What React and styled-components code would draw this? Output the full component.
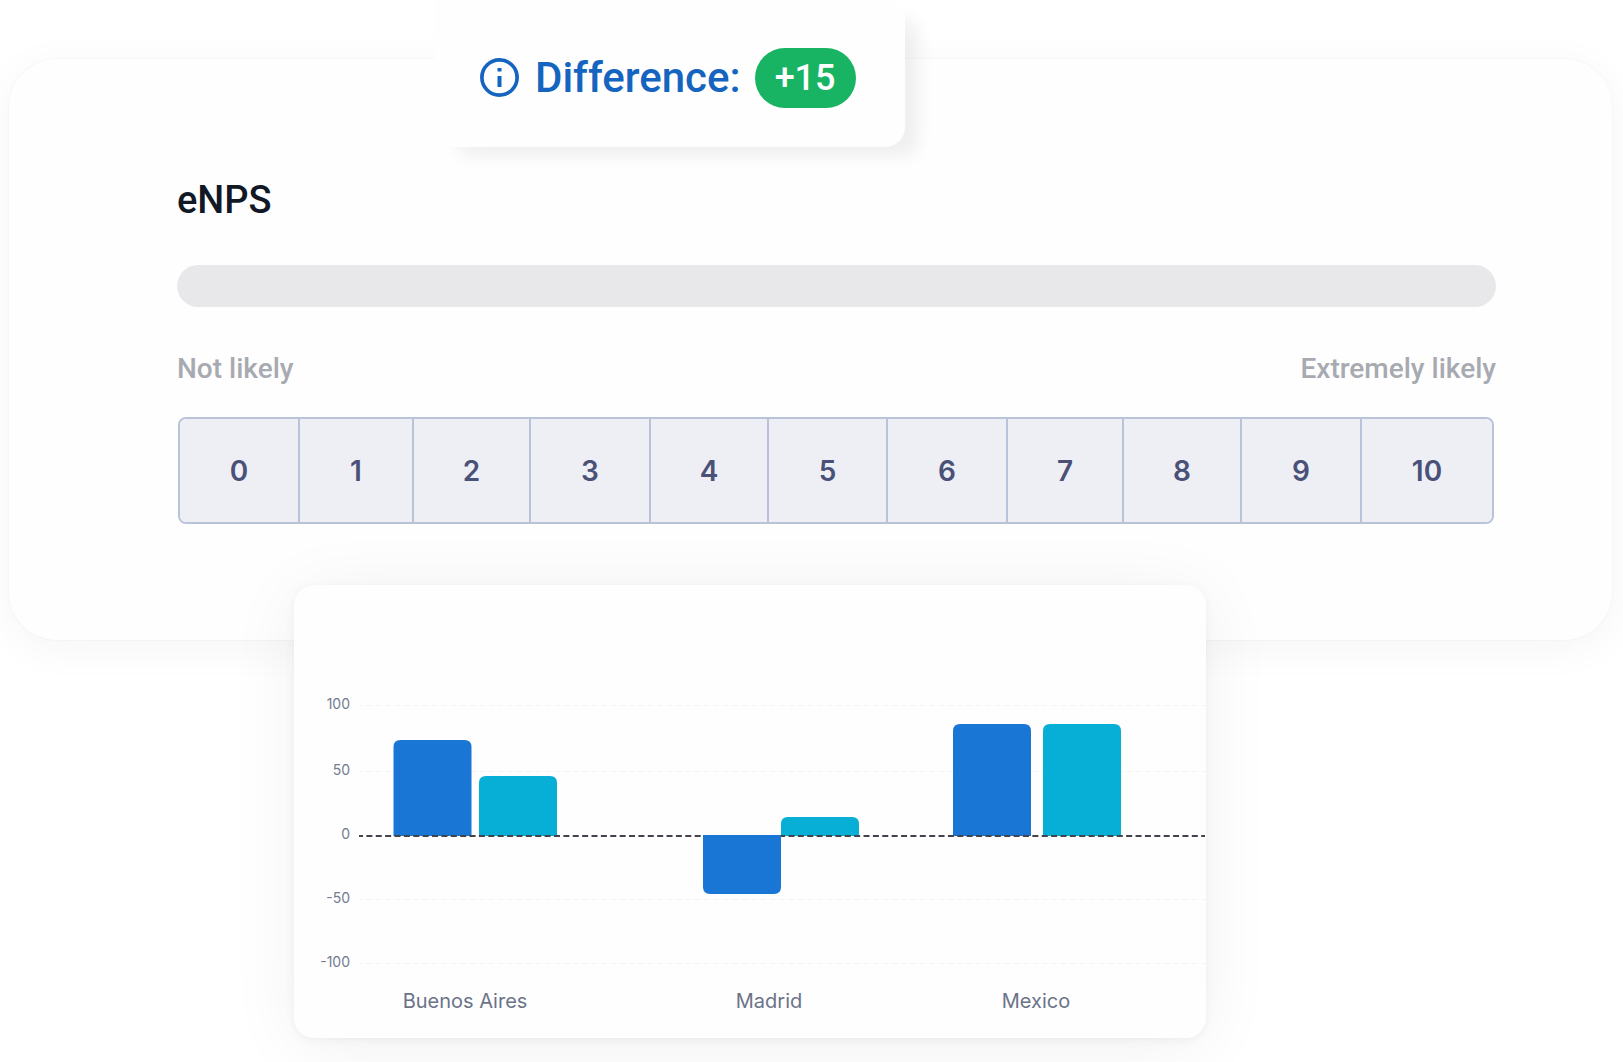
import React, { useState } from 'react';
import styled, { createGlobalStyle } from 'styled-components';

const GlobalStyle = createGlobalStyle`
    * {
        box-sizing: border-box;
    }
    body {
        margin: 0;
        background: #fff;
        font-family: Roboto, sans-serif;
        overflow-x: hidden;
    }
`;
const Page = styled.main`
    padding: 59px 11px 24px 9px;
`;
const SurveyCard = styled.section`
    position: relative;
    background: #fefefe;
    border-radius: 48px;
    box-shadow: 0 0 1px 1px rgba(0,0,0,.02), 0 8px 44px rgba(0,0,0,.045);
    padding: 119px 116px 116px 168px;
`;
// floats over the top edge of the survey card
const DifferenceCard = styled.div`
    position: absolute;
    top: -59px;
    left: 425px;
    height: 147px;
    padding: 8px 49px 0 45px;
    display: flex;
    align-items: center;
    background: #fefefe;
    border-radius: 0 20px 20px 20px;
    box-shadow: 18px 14px 16px -4px rgba(0,0,0,.06);
`;
const InfoIcon = styled.svg`
    width: 40px;
    height: 40px;
    margin-right: 16px;
`;
const DifferenceLabel = styled.span`
    color: #1565c0;
    font-size: 42px;
    font-weight: 500;
    line-height: 48px;
`;
const Pill = styled.span`
    background: #19b463;
    color: #fff;
    border-radius: 30px;
    font-size: 36px;
    font-weight: 500;
    line-height: 60px;
    padding: 0 20px;
    margin-left: 14px;
`;
const Title = styled.h1`
    margin: 0 0 43px;
    color: #111927;
    font-size: 38px;
    font-weight: 500;
    line-height: 44px;
`;
const Placeholder = styled.div`
    height: 42px;
    border-radius: 21px;
    background: #e8e8ea;
`;
const Hints = styled.div`
    display: flex;
    justify-content: space-between;
    margin: 46px 0 32px;
    color: #a7aab0;
    font-size: 28px;
    font-weight: 500;
    line-height: 32px;
`;
const Scale = styled.div`
    display: grid;
    grid-template-columns: 120fr 114fr 117fr 120fr 118fr 119fr 120fr 116fr 118fr 120fr 130fr;
    height: 107px;
    margin: 0 2px 0 1px;
    border: 2px solid #b8c2d9;
    border-radius: 8px;
    overflow: hidden;
`;
const ScaleButton = styled.button`
    border: 0;
    border-right: 2px solid #b8c2d9;
    padding: 0;
    background: ${({ $selected }) => ($selected ? '#dcdfed' : '#eeeff5')};
    color: #4a5178;
    font-family: Inter, sans-serif;
    font-size: 28px;
    font-weight: 600;
    cursor: pointer;
    &:last-child {
        border-right: 0;
    }
`;
const ChartCard = styled.section`
    position: relative;
    width: 912px;
    max-width: 100%;
    margin: -55px 0 0 285px;
    background: #fefefe;
    border-radius: 20px;
    box-shadow: 0 2px 10px rgba(0,0,0,.05), 0 8px 72px rgba(0,0,0,.06);
`;
const Chart = styled.svg`
    display: block;
    width: 100%;
    height: auto;
    font-family: Inter, sans-serif;
`;
const GridLine = styled.line`
    stroke: ${({ $zero }) => ($zero ? '#43434b' : '#f3f4f6')};
    stroke-width: ${({ $zero }) => ($zero ? 2 : 1)};
    stroke-dasharray: 6 3.38;
    stroke-dashoffset: 2;
`;
const TickText = styled.text`
    fill: #737b90;
    font-size: 14px;
    text-anchor: end;
`;
const CityText = styled.text`
    fill: #6b7389;
    font-size: 20px;
    text-anchor: middle;
`;

const BLUE = '#1a76d4';
const CYAN = '#07aed5';
const BAR_WIDTH = 78;
const ZERO_Y = 251;

const scores = [0, 1, 2, 3, 4, 5, 6, 7, 8, 9, 10];
const ticks = [
    { value: 100, y: 121 },
    { value: 50, y: 187 },
    { value: 0, y: ZERO_Y },
    { value: -50, y: 315 },
    { value: -100, y: 379 },
];
const cities = [
    { name: 'Buenos Aires', x: 171 },
    { name: 'Madrid', x: 475 },
    { name: 'Mexico', x: 742 },
];
const bars = [
    { x: 99.5, height: 96, color: BLUE },
    { x: 185, height: 60, color: CYAN },
    { x: 487, height: 19, color: CYAN },
    { x: 659, height: 112, color: BLUE },
    { x: 749, height: 112, color: CYAN },
];

// bar standing on the base line, rounded at its free end
function barPath(x, height, base = ZERO_Y) {
    const r = 7;
    const dir = height > 0 ? -1 : 1;
    const end = base - height;
    const inner = end - dir * r;
    return `M${x} ${base}V${inner}Q${x} ${end} ${x + r} ${end}H${x + BAR_WIDTH - r}Q${x + BAR_WIDTH} ${end} ${x + BAR_WIDTH} ${inner}V${base}Z`;
}

function ResultsChart() {
    return (
        <Chart viewBox="0 0 912 453" role="img" aria-label="eNPS by city">
            {ticks.map((t) => (
                <TickText key={t.value} x="56" y={t.y + 3}>{t.value}</TickText>
            ))}
            {ticks.filter((t) => t.value !== 0).map((t) => (
                <GridLine key={t.value} x1="65" x2="911" y1={t.y - 0.5} y2={t.y - 0.5} />
            ))}
            {bars.map((b) => (
                <path key={b.x} d={barPath(b.x, b.height)} fill={b.color} />
            ))}
            <GridLine $zero x1="65" x2="911" y1={ZERO_Y} y2={ZERO_Y} />
            {/* the negative bar covers the zero line */}
            <path d={barPath(409, -59, ZERO_Y - 1)} fill={BLUE} />
            {cities.map((c) => (
                <CityText key={c.name} x={c.x} y="423">{c.name}</CityText>
            ))}
        </Chart>
    );
}

function App() {
    const [score, setScore] = useState(null);
    return (
        <>
            <GlobalStyle />
            <Page>
                <SurveyCard>
                    <DifferenceCard>
                        <InfoIcon viewBox="0 0 40 40" fill="none" aria-hidden="true">
                            <circle cx="20.5" cy="19.5" r="17.6" stroke="#1565c0" strokeWidth="3.7" />
                            <path d="M18.5 10h4v3.5h-4zM18.5 18h4v11h-4z" fill="#1565c0" />
                        </InfoIcon>
                        <DifferenceLabel>Difference:</DifferenceLabel>
                        <Pill>+15</Pill>
                    </DifferenceCard>
                    <Title>eNPS</Title>
                    <Placeholder />
                    <Hints>
                        <span>Not likely</span>
                        <span>Extremely likely</span>
                    </Hints>
                    <Scale>
                        {scores.map((n) => (
                            <ScaleButton key={n} type="button" $selected={score === n} onClick={() => setScore(n)}>
                                {n}
                            </ScaleButton>
                        ))}
                    </Scale>
                </SurveyCard>
                <ChartCard>
                    <ResultsChart />
                </ChartCard>
            </Page>
        </>
    );
}

export default App;
